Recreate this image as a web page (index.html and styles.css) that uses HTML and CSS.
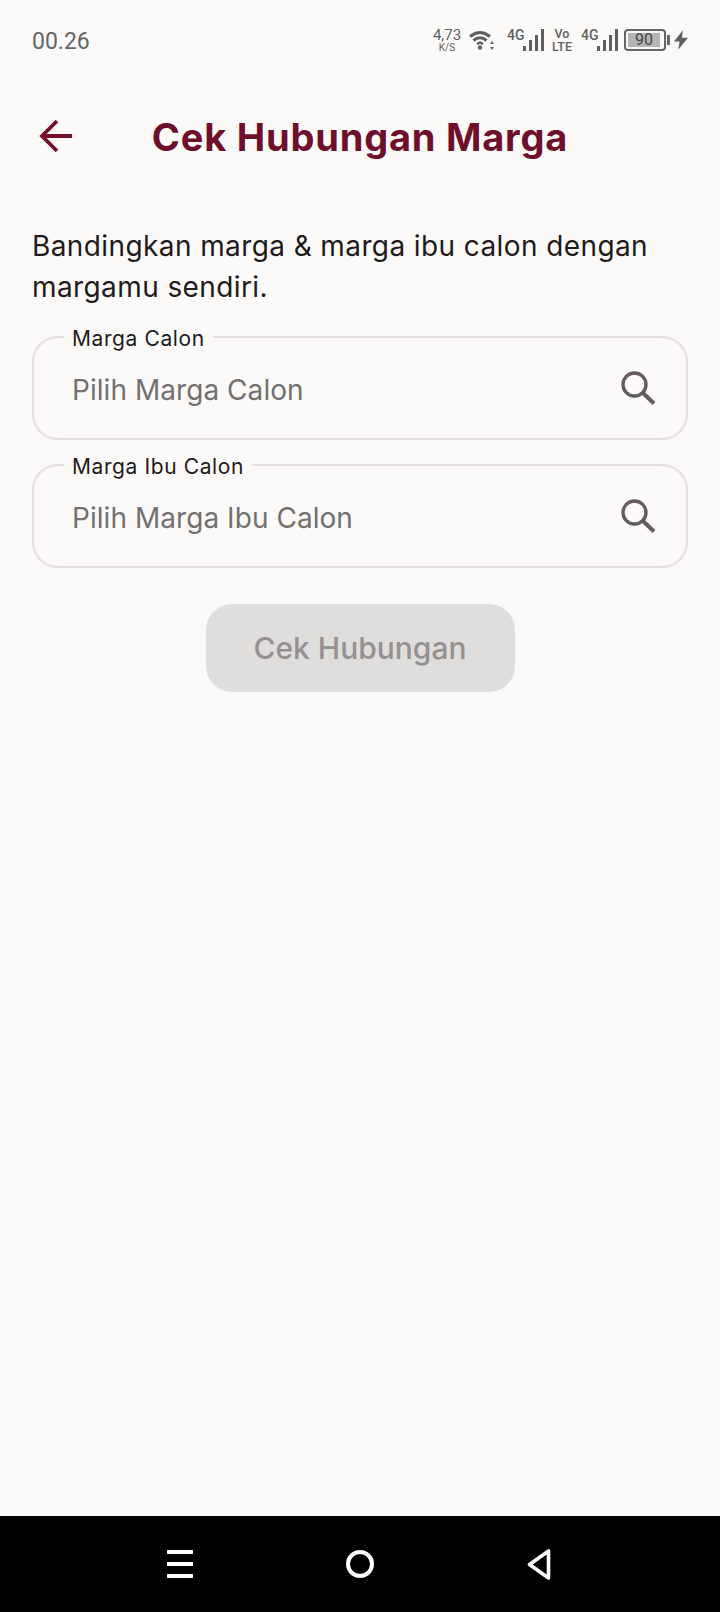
FILE: index.html
```html
<!DOCTYPE html>
<html>
<head>
<meta charset="utf-8">
<title>Cek Hubungan Marga</title>
<link rel="stylesheet" href="styles.css">
</head>
<body>
<div class="screen">
    <div class="statusBar">
        <span class="time">00.26</span>
        <div class="statusIcons">
            <div class="speed"><span class="speedNum">4,73</span><span class="speedUnit">K/S</span></div>
            <svg class="wifi" width="25" height="20" viewBox="0 0 25 20">
                <path d="M1 6.500 Q11 -1.500 21 6.500" fill="none" stroke="#5f5f5f" stroke-width="3"/>
                <path d="M4.500 10.500 Q11 5 17.500 10.500" fill="none" stroke="#5f5f5f" stroke-width="3"/>
                <path d="M8 14 Q11 11.500 14 14" fill="none" stroke="#5f5f5f" stroke-width="2.600"/>
                <circle cx="11" cy="17.500" r="2.200" fill="#5f5f5f"/>
                <path d="M23 11 L25 14 H21 Z M23 20 L25 17 H21 Z" fill="#5f5f5f"/>
            </svg>
            <div class="signal">
                <span class="net">4G</span>
                <svg width="21" height="22" viewBox="0 0 21 22"><path d="M0 17h3v5H0zM6 11h3v11H6zM12 6h3v16h-3zM18 0h3v22h-3z" fill="#5f5f5f"/></svg>
            </div>
            <div class="volte"><span class="volteLine">Vo</span><span class="volteLine">LTE</span></div>
            <div class="signal">
                <span class="net">4G</span>
                <svg width="21" height="22" viewBox="0 0 21 22"><path d="M0 17h3v5H0zM6 11h3v11H6zM12 6h3v16h-3zM18 0h3v22h-3z" fill="#5f5f5f"/></svg>
            </div>
            <div class="battery">
                <div class="batteryBody"><span class="batteryFill">90</span></div>
                <div class="batteryTip"></div>
            </div>
            <svg class="bolt" width="14" height="20" viewBox="0 0 15 21"><path d="M9.500 0 L0 12 H6 L4.500 21 L15 8 H8.500 Z" fill="#5f5f5f"/></svg>
        </div>
    </div>

    <div class="header">
        <svg class="backIcon" width="34" height="34" viewBox="0 0 34 34">
            <path d="M33 17H3M18 2 3 17 18 32" fill="none" stroke="#6e0f2c" stroke-width="3.800"/>
        </svg>
        <h1 class="title">Cek Hubungan Marga</h1>
    </div>

    <div class="content">
        <p class="desc">Bandingkan marga &amp; marga ibu calon dengan margamu sendiri.</p>

        <fieldset class="field">
            <legend class="fieldLabel">Marga Calon</legend>
            <span class="placeholder">Pilih Marga Calon</span>
            <svg class="searchIcon" width="36" height="36" viewBox="0 0 36 36">
                <circle cx="14.500" cy="14.500" r="11.500" fill="none" stroke="#655a5c" stroke-width="3.400"/>
                <path d="M23 23 34 33.500" fill="none" stroke="#655a5c" stroke-width="4"/>
            </svg>
        </fieldset>

        <fieldset class="field">
            <legend class="fieldLabel">Marga Ibu Calon</legend>
            <span class="placeholder">Pilih Marga Ibu Calon</span>
            <svg class="searchIcon" width="36" height="36" viewBox="0 0 36 36">
                <circle cx="14.500" cy="14.500" r="11.500" fill="none" stroke="#655a5c" stroke-width="3.400"/>
                <path d="M23 23 34 33.500" fill="none" stroke="#655a5c" stroke-width="4"/>
            </svg>
        </fieldset>

        <div class="btnWrap">
            <div class="checkBtn">Cek Hubungan</div>
        </div>
    </div>

    <div class="navBar">
        <div class="navMenu"><span></span><span></span><span></span></div>
        <div class="navHome"></div>
        <svg width="24" height="31" viewBox="0 0 24 31">
            <path d="M21.500 2 V29 L2.500 15.500 Z" fill="none" stroke="#fff" stroke-width="3.600" stroke-linejoin="round"/>
        </svg>
    </div>
</div>
</body>
</html>
```
FILE: styles.css
```css
* {
    box-sizing: border-box;
}
body {
    margin: 0;
    background-color: #fbfaf8;
    font-family: Inter, "Open Sans", sans-serif;
}
.screen {
    width: 720px;
    height: 1612px;
    display: flex;
    flex-direction: column;
    overflow: hidden;
}
.statusBar {
    height: 80px;
    padding: 0 32px;
    display: flex;
    justify-content: space-between;
    align-items: center;
    color: #5f5f5f;
    font-family: Roboto, sans-serif;
}
.time {
    font-size: 23px;
    color: #666;
    margin-top: 2px;
}
.statusIcons {
    display: flex;
    align-items: center;
}
.speed {
    display: flex;
    flex-direction: column;
    align-items: center;
    width: 28px;
    margin-right: 8px;
}
.speedNum {
    font-size: 15px;
    line-height: 15px;
}
.speedUnit {
    font-size: 10px;
    line-height: 10px;
}
.wifi {
    margin-right: 13px;
}
.signal {
    display: flex;
    align-items: flex-start;
    width: 37px;
    height: 22px;
}
.net {
    font-size: 14px;
    line-height: 13px;
    font-weight: 500;
    width: 16px;
}
.signal svg {
    flex: none;
}
.volte {
    display: flex;
    flex-direction: column;
    align-items: center;
    width: 20px;
    margin: 0 9px 0 8px;
    font-size: 12.500px;
    font-weight: 500;
}
.volteLine {
    line-height: 13px;
}
.battery {
    display: flex;
    align-items: center;
    margin: 0 4px 0 6px;
}
.batteryBody {
    width: 42px;
    height: 22px;
    padding: 2px;
    border: 2px solid #666;
    border-radius: 4px;
}
.batteryFill {
    display: block;
    width: 32px;
    height: 14px;
    background-color: #b4b4b4;
    text-align: center;
    font-size: 16px;
    line-height: 14px;
    color: #444;
}
.batteryTip {
    width: 3px;
    height: 10px;
    margin-left: 1px;
    background-color: #666;
}
.header {
    height: 116px;
    padding-bottom: 2px;
    position: relative;
    display: flex;
    align-items: center;
    justify-content: center;
}
.backIcon {
    position: absolute;
    left: 39px;
    top: 39px;
}
.title {
    margin: 0;
    font-size: 38px;
    font-weight: 700;
    letter-spacing: 0.8px;
    color: #6e0f2c;
}
.content {
    flex: 1;
    padding: 30px 32px 0 32px;
}
.desc {
    margin: 0 0 15px 0;
    font-size: 28px;
    line-height: 41px;
    color: #1f1a1c;
    letter-spacing: 0.4px;
}
.field {
    height: 117px;
    margin: 0 0 11px 0;
    padding: 0 0 11px 38px;
    border: 2px solid #e5dfdf;
    border-radius: 26px;
    display: flex;
    align-items: center;
}
.fieldLabel {
    padding: 4px 8px 0 8px;
    margin-left: -8px;
    font-size: 21px;
    line-height: 24px;
    letter-spacing: 0.6px;
    color: #1f1a1c;
}
.placeholder {
    font-size: 28px;
    margin-top: 2px;
    color: #737070;
    letter-spacing: 0.05px;
}
.searchIcon {
    margin-left: auto;
    margin-right: 30px;
    margin-bottom: 2px;
}
.btnWrap {
    display: flex;
    justify-content: center;
    margin-top: 36px;
}
.checkBtn {
    width: 309px;
    height: 88px;
    border-radius: 26px;
    background-color: #dfdedc;
    color: #959190;
    font-size: 30px;
    font-weight: 500;
    display: flex;
    align-items: center;
    justify-content: center;
}
.navBar {
    height: 96px;
    background-color: #000;
    padding: 0 169px 0 167px;
    display: flex;
    align-items: center;
    justify-content: space-between;
}
.navMenu {
    width: 26px;
    display: flex;
    flex-direction: column;
    gap: 8px;
}
.navMenu span {
    display: block;
    height: 4px;
    background-color: #fff;
}
.navHome {
    width: 28px;
    height: 28px;
    border: 4px solid #fff;
    border-radius: 50%;
}
```
